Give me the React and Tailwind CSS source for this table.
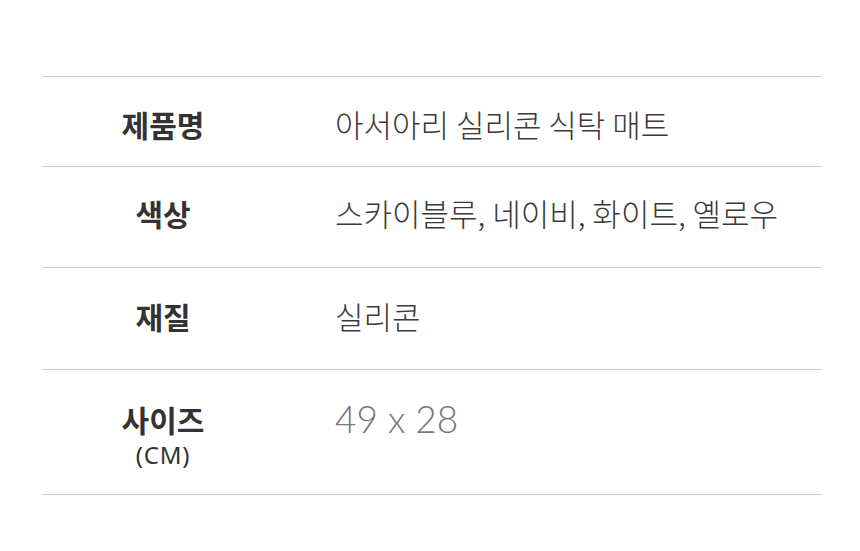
import React from "react";

const rows = [
  { label: "제품명", value: "아서아리 실리콘 식탁 매트", h: "h-[90px] pt-[4px]" },
  { label: "색상", value: "스카이블루, 네이비, 화이트, 옐로우", h: "h-[101px] pb-[8px]" },
  { label: "재질", value: "실리콘", h: "h-[102px] pb-[6px]" },
];

const ko = { fontFamily: '"Noto Sans CJK KR", "Noto Sans", sans-serif' };

const App = () => {
  return (
    <div className="w-[860px] h-[551px] bg-white pt-[76px] px-[42px]">
      <div className="w-[780px] border-t border-[#c9c9c9]">
        {rows.map((item) => (
          <div
            key={item.label}
            className={`flex items-center border-b border-[#c9c9c9] ${item.h}`}
          >
            <div
              className="w-[242px] text-center text-[30px] font-bold text-[#333] leading-[36px]"
              style={ko}
            >
              {item.label}
            </div>
            <div
              className="pl-[51px] text-[31px] font-light text-[#3a3a3a] leading-[36px]"
              style={ko}
            >
              {item.value}
            </div>
          </div>
        ))}
        <div className="flex items-start h-[125px] border-b border-[#c9c9c9] pt-[31px]">
          <div className="w-[242px] flex flex-col items-center" style={ko}>
            <span className="text-[30px] font-bold text-[#333] leading-[36px]">
              사이즈
            </span>
            <span
              className="text-[24px] font-normal text-[#333] leading-[28px] mt-[4px] tracking-[0.8px]"
              style={{ fontFamily: '"Noto Sans", sans-serif' }}
            >
              (CM)
            </span>
          </div>
          <div
            className="pl-[51px] text-[37px] font-light text-[#777] leading-[36px]"
            style={{ fontFamily: 'Lato, "Liberation Sans", sans-serif' }}
          >
            49 x 28
          </div>
        </div>
      </div>
    </div>
  );
};

export default App;
